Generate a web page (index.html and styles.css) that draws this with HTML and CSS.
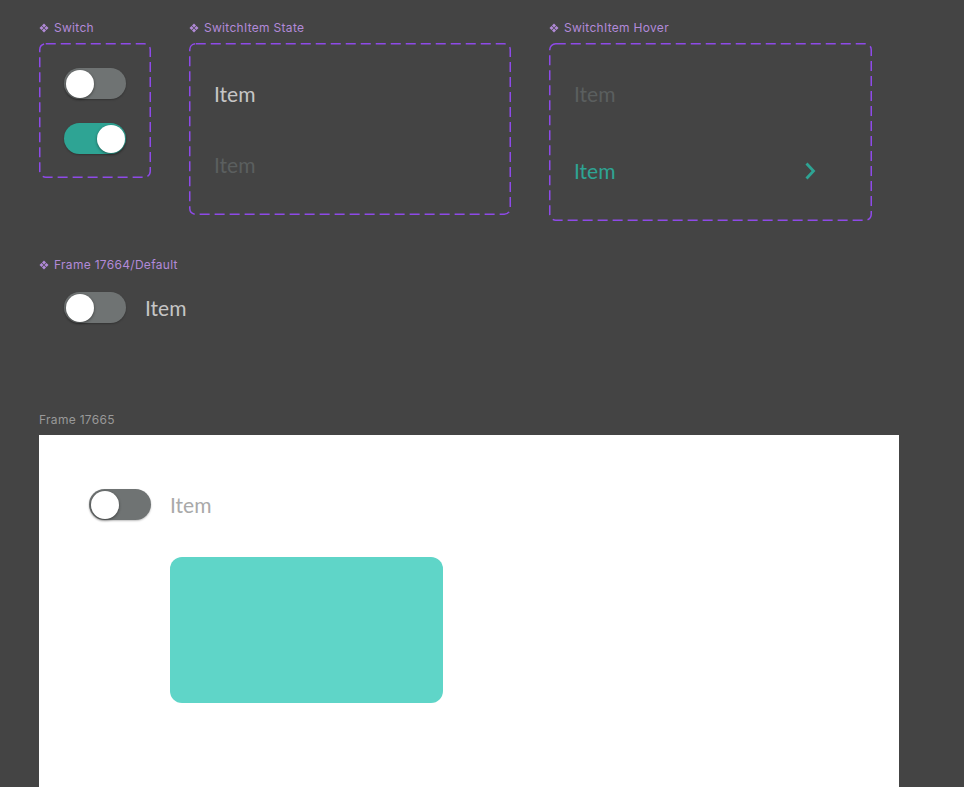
FILE: index.html
```html
<!DOCTYPE html>
<html>
<head>
<meta charset="utf-8">
<link rel="stylesheet" href="styles.css">
</head>
<body>
<div class="page">
  <div class="top-row">
    <div class="col col-switch">
      <div class="label"><svg class="comp" viewBox="0 0 10 10"><path d="M5 0.5 L7 2.5 L5 4.5 L3 2.5Z M2.5 3 L4.5 5 L2.5 7 L0.5 5Z M7.5 3 L9.5 5 L7.5 7 L5.5 5Z M5 5.5 L7 7.5 L5 9.5 L3 7.5Z"/></svg>Switch</div>
      <div class="box box-switch">
        <svg class="dash"><rect/></svg>
        <div class="switch"><span class="knob"></span></div>
        <div class="switch on"><span class="knob"></span></div>
      </div>
    </div>
    <div class="col col-state">
      <div class="label"><svg class="comp" viewBox="0 0 10 10"><path d="M5 0.5 L7 2.5 L5 4.5 L3 2.5Z M2.5 3 L4.5 5 L2.5 7 L0.5 5Z M7.5 3 L9.5 5 L7.5 7 L5.5 5Z M5 5.5 L7 7.5 L5 9.5 L3 7.5Z"/></svg>SwitchItem State</div>
      <div class="box box-state">
        <svg class="dash"><rect/></svg>
        <div class="row"><span class="item">Item</span></div>
        <div class="row"><span class="item dim">Item</span></div>
      </div>
    </div>
    <div class="col col-hover">
      <div class="label"><svg class="comp" viewBox="0 0 10 10"><path d="M5 0.5 L7 2.5 L5 4.5 L3 2.5Z M2.5 3 L4.5 5 L2.5 7 L0.5 5Z M7.5 3 L9.5 5 L7.5 7 L5.5 5Z M5 5.5 L7 7.5 L5 9.5 L3 7.5Z"/></svg>SwitchItem Hover</div>
      <div class="box box-hover">
        <svg class="dash"><rect/></svg>
        <div class="row"><span class="item dim">Item</span></div>
        <div class="row row-hover"><span class="item teal">Item</span>
          <svg class="chev" viewBox="0 0 24 24"><path d="M8.5 4.5 L15.5 12 L8.5 19.5"/></svg>
        </div>
      </div>
    </div>
  </div>

  <div class="label label-default"><svg class="comp" viewBox="0 0 10 10"><path d="M5 0.5 L7 2.5 L5 4.5 L3 2.5Z M2.5 3 L4.5 5 L2.5 7 L0.5 5Z M7.5 3 L9.5 5 L7.5 7 L5.5 5Z M5 5.5 L7 7.5 L5 9.5 L3 7.5Z"/></svg>Frame 17664/Default</div>
  <div class="default-row">
    <div class="switch"><span class="knob"></span></div>
    <span class="item">Item</span>
  </div>

  <div class="label label-frame">Frame 17665</div>
  <div class="frame">
    <div class="frame-row">
      <div class="switch"><span class="knob"></span></div>
      <span class="item light">Item</span>
    </div>
    <div class="teal-card"></div>
  </div>
</div>
</body>
</html>
```

FILE: styles.css
```css
html, body {
  margin: 0;
  padding: 0;
  background: #444444;
  height: 100%;
  overflow: hidden;
}

.page {
  padding: 21px 0 0 39px;
  font-family: "Lato", "Noto Sans", sans-serif;
}

.top-row {
  display: flex;
  gap: 38px;
  align-items: flex-start;
}

.label {
  font-family: "Inter", "Noto Sans", sans-serif;
  font-size: 12px;
  letter-spacing: 0.3px;
  line-height: 14px;
  height: 14px;
  color: #b28ad9;
  display: flex;
  align-items: center;
  gap: 5px;
  margin-bottom: 8px;
  white-space: nowrap;
}

.comp {
  width: 10px;
  height: 10px;
  fill: #b28ad9;
  flex: none;
}

.box {
  position: relative;
  box-sizing: border-box;
}

.dash {
  position: absolute;
  left: 0;
  top: 0;
  width: 100%;
  height: 100%;
  overflow: visible;
  pointer-events: none;
}

.dash rect {
  x: 0.75px;
  y: 0.75px;
  width: calc(100% - 1.5px);
  height: calc(100% - 1.5px);
  rx: 6px;
  ry: 6px;
  fill: none;
  stroke: #8e4ae8;
  stroke-width: 1.5px;
  stroke-dasharray: 10 5;
}

.box-switch {
  width: 112px;
  height: 135px;
  padding: 25px;
  display: flex;
  flex-direction: column;
  gap: 24px;
}

.switch {
  width: 62px;
  height: 31px;
  border-radius: 16px;
  background: #6f7373;
  position: relative;
  flex: none;
  box-shadow: 0 1px 2px rgba(0,0,0,0.25);
}

.switch.on {
  background: #2ea494;
}

.knob {
  position: absolute;
  top: 1.5px;
  left: 1.5px;
  width: 28px;
  height: 28px;
  border-radius: 50%;
  background: #ffffff;
  box-shadow: 0 1px 3px rgba(0,0,0,0.45);
}

.switch.on .knob {
  left: auto;
  right: 1.5px;
}

.box-state {
  width: 322px;
  height: 172px;
  padding: 27px 25px 0 25px;
  display: flex;
  flex-direction: column;
  gap: 23px;
}

.box-hover {
  width: 323px;
  height: 178px;
  padding: 27px 50px 0 25px;
  display: flex;
  flex-direction: column;
  gap: 29px;
}

.row {
  height: 48px;
  display: flex;
  align-items: center;
  justify-content: space-between;
}

.item {
  font-family: "Lato", "Noto Sans", sans-serif;
  font-size: 21px;
  line-height: 24px;
  color: #c6c6c6;
}

.item.dim {
  color: #5b5f5f;
}

.item.teal {
  color: #2ea494;
}

.item.light {
  color: #a9a9a9;
}

.chev {
  width: 24px;
  height: 24px;
  fill: none;
  stroke: #2ea494;
  stroke-width: 2.8;
  stroke-linecap: butt;
  stroke-linejoin: miter;
}

.label-default {
  margin-top: 37px;
  margin-bottom: 20px;
}

.default-row {
  display: flex;
  align-items: center;
  gap: 19px;
  padding-left: 25px;
}

.label-frame {
  margin-top: 90px;
  color: #999999;
}

.frame {
  width: 860px;
  height: 400px;
  background: #ffffff;
  padding: 54px 0 0 50px;
  box-sizing: border-box;
}

.frame-row {
  display: flex;
  align-items: center;
  gap: 19px;
}

.teal-card {
  margin: 37px 0 0 81px;
  width: 273px;
  height: 146px;
  border-radius: 12px;
  background: #5fd5c8;
}
```
